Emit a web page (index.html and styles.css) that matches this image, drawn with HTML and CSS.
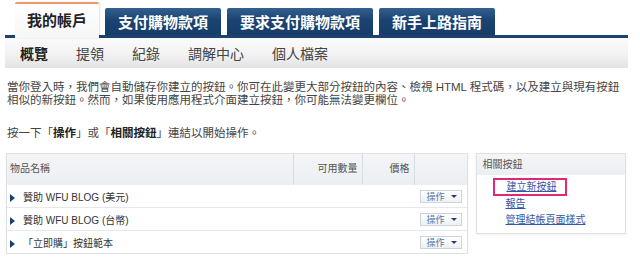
FILE: index.html
```html
<!DOCTYPE html>
<html lang="zh-Hant">
<head>
    <meta charset="UTF-8">
    <title>我的帳戶 - 概覽</title>
    <link rel="stylesheet" href="styles.css">
</head>
<body>
    <div class="page">
        <div class="tabs">
            <div class="tab active">我的帳戶</div>
            <div class="tab">支付購物款項</div>
            <div class="tab">要求支付購物款項</div>
            <div class="tab">新手上路指南</div>
        </div>

        <div class="subnav">
            <span class="current">概覽</span>
            <span>提領</span>
            <span>紀錄</span>
            <span>調解中心</span>
            <span>個人檔案</span>
        </div>

        <div class="intro">
            <p>當你登入時，我們會自動儲存你建立的按鈕。你可在此變更大部分按鈕的內容、檢視 HTML 程式碼，以及建立與現有按鈕<br>相似的新按鈕。然而，如果使用應用程式介面建立按鈕，你可能無法變更欄位。</p>
            <p>按一下「<b>操作</b>」或「<b>相關按鈕</b>」連結以開始操作。</p>
        </div>

        <div class="main">
            <div class="items">
                <table>
                    <thead>
                        <tr>
                            <th class="col-name">物品名稱</th>
                            <th class="col-qty">可用數量</th>
                            <th class="col-price">價格</th>
                            <th class="col-action"></th>
                        </tr>
                    </thead>
                    <tbody>
                        <tr>
                            <td><span class="arrow"></span>贊助 WFU BLOG (美元)</td>
                            <td></td>
                            <td></td>
                            <td class="col-action"><span class="op-button">操作<span class="caret"></span></span></td>
                        </tr>
                        <tr>
                            <td><span class="arrow"></span>贊助 WFU BLOG (台幣)</td>
                            <td></td>
                            <td></td>
                            <td class="col-action"><span class="op-button">操作<span class="caret"></span></span></td>
                        </tr>
                        <tr>
                            <td><span class="arrow"></span>「立即購」按鈕範本</td>
                            <td></td>
                            <td></td>
                            <td class="col-action"><span class="op-button">操作<span class="caret"></span></span></td>
                        </tr>
                    </tbody>
                </table>
            </div>

            <div class="related">
                <div class="related-head">相關按鈕</div>
                <ul class="related-links">
                    <li><a href="#" class="marked">建立新按鈕</a></li>
                    <li><a href="#">報告</a></li>
                    <li><a href="#">管理結帳頁面樣式</a></li>
                </ul>
            </div>
        </div>
    </div>
</body>
</html>
```

FILE: styles.css
```css
body {
    margin: 0;
    background-color: #fff;
    color: #333;
    font-family: "Liberation Sans", "Noto Sans CJK TC", sans-serif;
}
.page {
    padding: 2px 12px 0 5px;
}

/* 上方分頁 */
.tabs {
    display: flex;
    align-items: flex-end;
    gap: 6px;
    height: 33px;
    padding-left: 10px;
    border-bottom: 3px solid #1b4372;
}
.tab {
    height: 27px;
    padding: 0 13px;
    display: flex;
    align-items: center;
    justify-content: center;
    background: linear-gradient(#33608f, #1b4372 45%, #173c68);
    color: #fff;
    font-size: 15px;
    font-weight: bold;
    border-radius: 2px 2px 0 0;
}
.tab.active {
    height: 36px;
    margin-bottom: -3px;
    padding: 0 12px 3px;
    box-sizing: border-box;
    background: linear-gradient(#fff, #f6f6f6);
    color: #222;
    border-top: 2px solid #ee9a6a;
    box-shadow: 1px 0 2px rgba(0,0,0,0.12);
}

/* 子選單 */
.subnav {
    display: flex;
    align-items: center;
    gap: 28px;
    height: 30px;
    padding-left: 15px;
    background: linear-gradient(#fbfbfb, #f2f2f2 55%, #e3e3e3);
    font-size: 14px;
    color: #444;
}
.subnav .current {
    font-weight: bold;
    color: #222;
}

/* 說明文字 */
.intro {
    padding: 0 2px;
    font-size: 11.5px;
    line-height: 13px;
    color: #444;
}
.intro p {
    margin: 13px 0 0;
}
.intro p + p {
    margin-top: 20px;
}
.intro b {
    color: #222;
}

.main {
    display: flex;
    align-items: flex-start;
    gap: 8px;
    margin-top: 13px;
    padding: 0 2px 0 1px;
}

/* 物品表格 */
.items {
    width: 462px;
    border: 1px solid #dde1e6;
    box-shadow: 0 1px 2px rgba(0,0,0,0.06);
}
.items table {
    width: 100%;
    border-collapse: collapse;
    font-size: 10px;
}
.items th {
    height: 31px;
    padding: 6px 4px 0;
    box-sizing: border-box;
    vertical-align: top;
    font-weight: normal;
    color: #555;
    background: linear-gradient(#f3f5f7, #eceff2);
    border-left: 1px solid #d8dce2;
    text-align: right;
}
.items th.col-name {
    border-left: none;
    text-align: left;
    padding-left: 3px;
}
.col-name { width: 286px; }
.col-qty { width: 69px; }
.col-price { width: 52px; }
.items td {
    height: 22px;
    padding: 0;
    border-top: 1px solid #e6e8eb;
    color: #333;
    white-space: nowrap;
}
.items tbody tr:first-child td {
    border-top: none;
}
.arrow {
    display: inline-block;
    width: 0;
    height: 0;
    margin: 0 8px 0 3px;
    border-left: 5px solid #1b4372;
    border-top: 4px solid transparent;
    border-bottom: 4px solid transparent;
    vertical-align: -1px;
}
.items td.col-action {
    text-align: right;
    padding-right: 5px;
}
.op-button {
    display: inline-flex;
    align-items: center;
    justify-content: space-between;
    width: 42px;
    height: 13px;
    padding: 0 4px 0 5px;
    box-sizing: border-box;
    border: 1px solid #cfd3da;
    background: linear-gradient(#fff, #eef0f3);
    color: #5474aa;
    font-size: 9px;
    vertical-align: middle;
}
.caret {
    width: 0;
    height: 0;
    border-top: 3px solid #1b4372;
    border-left: 3px solid transparent;
    border-right: 3px solid transparent;
}

/* 相關按鈕 */
.related {
    width: 150px;
    height: 81px;
    box-sizing: border-box;
    border: 1px solid #dde1e6;
    box-shadow: 0 1px 2px rgba(0,0,0,0.06);
}
.related-head {
    height: 21px;
    padding-left: 5px;
    line-height: 21px;
    font-size: 10px;
    color: #555;
    background: linear-gradient(#f3f5f7, #eceff2);
}
.related-links {
    list-style: none;
    margin: 0;
    padding: 3px 0 0 16px;
    font-size: 10px;
    line-height: 16px;
}
.related-links a {
    color: #3556a6;
    text-decoration: underline;
    padding-left: 12px;
}
.related-links a.marked {
    display: inline-block;
    height: 18px;
    line-height: 14px;
    padding: 0 9px 0 11px;
    box-sizing: border-box;
    border: 2px solid #e0287a;
}
```
